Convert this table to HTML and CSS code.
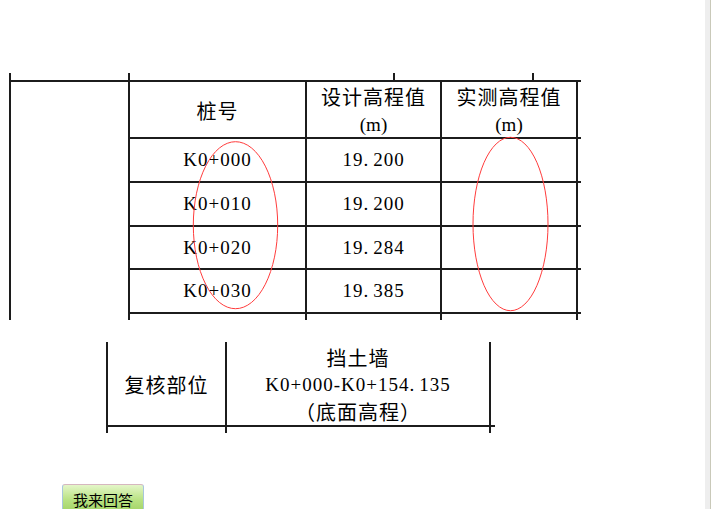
FILE: index.html
```html
<!DOCTYPE html>
<html lang="zh-CN">
<head>
<meta charset="utf-8">
<title>复核部位</title>
<link rel="stylesheet" href="styles.css">
</head>
<body>
<div class="page">
  <main class="doc">
    <section class="sheet sheet-top">
      <div class="stub">
        <div class="stub-cell w1"></div>
        <div class="stub-cell w2"></div>
        <div class="stub-cell w3"></div>
        <div class="stub-cell w4"></div>
      </div>
      <div class="grid grid-top">
        <div class="cell side"></div>
        <div class="cell head"><span class="cn">桩号</span></div>
        <div class="cell head two"><span class="cn">设计高程值</span><span class="unit">(m)</span></div>
        <div class="cell head two"><span class="cn">实测高程值</span><span class="unit">(m)</span></div>
        <div class="cell extra"></div>

        <div class="cell">K0+000</div>
        <div class="cell">19<span class="dot">.</span>200</div>
        <div class="cell"></div>
        <div class="cell extra"></div>

        <div class="cell">K0+010</div>
        <div class="cell">19<span class="dot">.</span>200</div>
        <div class="cell"></div>
        <div class="cell extra"></div>

        <div class="cell">K0+020</div>
        <div class="cell">19<span class="dot">.</span>284</div>
        <div class="cell"></div>
        <div class="cell extra"></div>

        <div class="cell">K0+030</div>
        <div class="cell">19<span class="dot">.</span>385</div>
        <div class="cell"></div>
        <div class="cell extra"></div>

        <div class="cell"></div>
        <div class="cell"></div>
        <div class="cell"></div>
        <div class="cell extra"></div>
      </div>
      <svg class="marks" width="572" height="247" viewBox="0 0 572 247" aria-hidden="true">
        <ellipse cx="226.5" cy="152.2" rx="42.2" ry="83.5" fill="none" stroke="#ff3c3c" stroke-width="1"/>
        <ellipse cx="501.5" cy="151" rx="37.5" ry="86.7" fill="none" stroke="#ff3c3c" stroke-width="1"/>
      </svg>
    </section>

    <section class="sheet sheet-bottom">
      <div class="grid grid-bottom">
        <div class="cell label"><span class="cn">复核部位</span></div>
        <div class="cell desc">
          <span class="cn">挡土墙</span>
          <span>K0+000-K0+154<span class="dot">.</span>135</span>
          <span class="cn">（底面高程）</span>
        </div>
        <div class="cell extra"></div>
        <div class="cell"></div>
        <div class="cell"></div>
        <div class="cell extra"></div>
      </div>
    </section>

    <button class="answer" type="button">我来回答</button>
  </main>
  <div class="edge"></div>
  <div class="rest"></div>
</div>
</body>
</html>
```

FILE: styles.css
```css
html, body {
  margin: 0;
  padding: 0;
  background: #ffffff;
}

.page {
  display: flex;
  height: 509px;
  overflow: hidden;
}

.doc {
  width: 705px;
  flex: none;
  display: flex;
  flex-direction: column;
  align-items: flex-start;
  font-family: "Liberation Serif", "Noto Sans CJK SC", serif;
  font-size: 19px;
  letter-spacing: 1px;
  color: #000;
}

.edge {
  width: 5px;
  flex: none;
  background: #eeeeee;
  border-right: 1px solid #c9c9b9;
}

.rest {
  flex: 1;
  background: #fff;
}

.sheet {
  position: relative;
  overflow: hidden;
  flex: none;
}

.sheet-top {
  margin-top: 73px;
  margin-left: 9px;
  width: 572px;
  height: 247px;
}

.stub {
  display: flex;
  height: 7px;
}

.stub-cell {
  border-left: 2px solid #1c1c1c;
  box-sizing: border-box;
  flex: none;
}
.stub-cell.w1 { width: 119px; }
.stub-cell.w2 { width: 265px; }
.stub-cell.w3 { width: 139px; }
.stub-cell.w4 { width: 60px; }

.grid {
  display: grid;
}

.grid-top {
  grid-template-columns: 119px 177px 135px 136px 60px;
  grid-template-rows: 57px 44px 44px 43px 44px 40px;
  border-top: 2px solid #1c1c1c;
  border-left: 2px solid #1c1c1c;
}

.cell {
  box-sizing: border-box;
  border-right: 2px solid #1c1c1c;
  border-bottom: 2px solid #1c1c1c;
  display: flex;
  align-items: center;
  justify-content: center;
  white-space: nowrap;
}

.cell.side {
  grid-row: 1 / -1;
}

.dot {
  letter-spacing: 5px;
}

.cn {
  font-family: "Noto Sans CJK SC", sans-serif;
  font-size: 20px;
  letter-spacing: 1px;
  font-weight: 400;
}

.head {
  padding-top: 1px;
}

.head.two {
  flex-direction: column;
  line-height: 28px;
  padding-top: 2px;
}

.unit {
  font-family: "Liberation Serif", serif;
  font-size: 19px;
  letter-spacing: 0;
}

.marks {
  position: absolute;
  left: 0;
  top: 0;
  pointer-events: none;
}

.sheet-bottom {
  margin-top: 22px;
  margin-left: 106px;
  width: 389px;
  height: 91px;
}

.grid-bottom {
  grid-template-columns: 119px 264px 40px;
  grid-template-rows: 85px 20px;
}

.grid-bottom .cell {
  border-right: none;
  border-left: 2px solid #1c1c1c;
}

.desc {
  flex-direction: column;
  line-height: 27px;
  padding-top: 1px;
}

.label {
  padding-top: 1px;
}

.answer {
  margin-top: 51px;
  margin-left: 62px;
  width: 82px;
  height: 32px;
  flex: none;
  padding: 0;
  border: 1px solid #a8c6dc;
  border-top-color: #d6b7bf;
  border-radius: 3px;
  background: linear-gradient(#e4f6c8, #b8e282 50%, #9ccf5e);
  font-family: "Noto Sans CJK SC", sans-serif;
  font-size: 15px;
  color: #000;
  line-height: 20px;
  letter-spacing: 0;
}
```
